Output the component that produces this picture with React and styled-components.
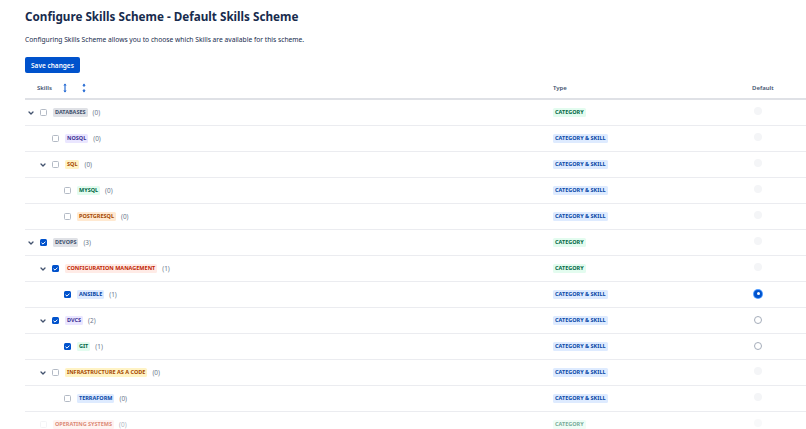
import { createGlobalStyle, styled } from "styled-components";

const GlobalStyle = createGlobalStyle`
  body {
    margin: 0;
    background: #fff;
    font-family: "Noto Sans", "Liberation Sans", sans-serif;
    color: #172b4d;
    overflow: hidden;
  }
`;

const Page = styled.div`
  padding: 7px 0 0 25px;
  width: 781px;
`;

const Title = styled.h1`
  margin: 0;
  font-size: 11.7px;
  line-height: 18px;
  font-weight: 700;
  color: #172b4d;
`;

const Description = styled.p`
  margin: 10px 0 0;
  font-size: 6.7px;
  line-height: 10px;
  color: #172b4d;
`;

const SaveButton = styled.button`
  margin-top: 12px;
  height: 16px;
  padding: 0 6px;
  border: none;
  border-radius: 2px;
  background: #0052cc;
  color: #fff;
  font-family: inherit;
  font-size: 6.5px;
  font-weight: 600;
  cursor: pointer;
`;

const Table = styled.div`
  margin-top: 4px;
`;

const HeadRow = styled.div`
  display: grid;
  grid-template-columns: 528px 199px 1fr;
  height: 21px;
  align-items: center;
  border-bottom: 2px solid #dfe1e6;
  font-size: 6px;
  font-weight: 600;
  color: #42526e;
`;

const HeadSkills = styled.div`
  display: flex;
  align-items: center;
  padding-left: 12px;
`;

const HeadLabel = styled.span`
  white-space: nowrap;
`;

const SortIcon = styled.svg`
  flex: none;
  width: 4px;
  height: 10px;
  margin-left: ${(p) => p.$gap}px;
`;

const Row = styled.div`
  display: grid;
  grid-template-columns: 528px 199px 1fr;
  height: 25px;
  align-items: center;
  border-bottom: 1px solid #ebecf0;
  opacity: ${(p) => (p.$faded ? 0.55 : 1)};
`;

const SkillCell = styled.div`
  display: flex;
  align-items: center;
  padding-left: ${(p) => p.$level * 12}px;
`;

const TypeCell = styled.div`
  display: flex;
  align-items: center;
`;

const ChevronSlot = styled.div`
  width: 15px;
  display: flex;
  align-items: center;
  padding-left: 3px;
  box-sizing: border-box;
`;

const Box = styled.span`
  width: 7px;
  height: 7px;
  box-sizing: border-box;
  border-radius: 1.5px;
  border: ${(p) => (p.$checked ? "none" : p.$faint ? "1px solid #ebecf0" : "1px solid #b3bac5")};
  background: ${(p) => (p.$checked ? "#0052cc" : "#fff")};
  display: flex;
  align-items: center;
  justify-content: center;
  margin-right: 6px;
`;

const palette = {
  grey: ["#dfe1e6", "#42526e"],
  purple: ["#eae6ff", "#403294"],
  yellow: ["#fff3c4", "#a54800"],
  orange: ["#ffe9d1", "#a54800"],
  green: ["#e3fcef", "#006644"],
  red: ["#ffebe6", "#bf2600"],
  blue: ["#deebff", "#0747a6"],
};

const Lozenge = styled.span`
  display: inline-block;
  height: 9px;
  line-height: 9px;
  padding: 0 2px;
  border-radius: 1.5px;
  font-size: 5.5px;
  font-weight: 700;
  text-transform: uppercase;
  white-space: nowrap;
  background: ${(p) => palette[p.$tone][0]};
  color: ${(p) => palette[p.$tone][1]};
`;

const Count = styled.span`
  margin-left: 5px;
  font-size: 6.4px;
  color: #6b778c;
`;

const RadioCell = styled.div`
  padding-left: 2px;
  display: flex;
`;

const Radio = styled.span`
  width: 8px;
  height: 8px;
  box-sizing: border-box;
  border-radius: 50%;
  margin-top: ${(p) => (p.$state === "disabled" ? -3 : -2)}px;
  background: ${(p) =>
    p.$state === "selected" ? "#0052cc" : p.$state === "disabled" ? "#f4f5f7" : "#fff"};
  border: ${(p) =>
    p.$state === "selected"
      ? "none"
      : p.$state === "disabled"
      ? "none"
      : "0.8px solid #a5adba"};
  box-shadow: ${(p) => (p.$state === "selected" ? "0 0 0 1px #4c9aff" : "none")};
  display: flex;
  align-items: center;
  justify-content: center;

  &::after {
    content: "";
    width: 3px;
    height: 3px;
    border-radius: 50%;
    background: #fff;
    display: ${(p) => (p.$state === "selected" ? "block" : "none")};
  }
`;

const rows = [
  { level: 0, expand: true, name: "Databases", tone: "grey", count: 0, type: "cat", radio: "disabled" },
  { level: 1, name: "NoSQL", tone: "purple", count: 0, type: "both", radio: "disabled" },
  { level: 1, expand: true, name: "SQL", tone: "yellow", count: 0, type: "both", radio: "disabled" },
  { level: 2, name: "MySQL", tone: "green", count: 0, type: "both", radio: "disabled" },
  { level: 2, name: "PostgreSQL", tone: "orange", count: 0, type: "both", radio: "disabled" },
  { level: 0, expand: true, checked: true, name: "DevOps", tone: "grey", count: 3, type: "cat", radio: "disabled" },
  { level: 1, expand: true, checked: true, name: "Configuration Management", tone: "red", count: 1, type: "cat", radio: "disabled" },
  { level: 2, checked: true, name: "Ansible", tone: "blue", count: 1, type: "both", radio: "selected" },
  { level: 1, expand: true, checked: true, name: "DVCS", tone: "purple", count: 2, type: "both", radio: "empty" },
  { level: 2, checked: true, name: "Git", tone: "green", count: 1, type: "both", radio: "empty" },
  { level: 1, expand: true, name: "Infrastructure as a Code", tone: "yellow", count: 0, type: "both", radio: "disabled" },
  { level: 2, name: "Terraform", tone: "blue", count: 0, type: "both", radio: "disabled" },
  { level: 0, name: "Operating Systems", tone: "red", count: 0, type: "cat", radio: "disabled", faded: true },
];

function Chevron() {
  return (
    <svg width="6" height="4" viewBox="0 0 6 4">
      <path d="M1 1 L3 3 L5 1" fill="none" stroke="#42526e" strokeWidth="1.3" strokeLinecap="round" strokeLinejoin="round" />
    </svg>
  );
}

function Check() {
  return (
    <svg width="5" height="4" viewBox="0 0 5 4">
      <path d="M0.8 2 L2 3.1 L4.2 0.9" fill="none" stroke="#fff" strokeWidth="1" strokeLinecap="round" strokeLinejoin="round" />
    </svg>
  );
}

function App() {
  return (
    <Page>
      <GlobalStyle />
      <Title>Configure Skills Scheme - Default Skills Scheme</Title>
      <Description>
        Configuring Skills Scheme allows you to choose which Skills are available for this scheme.
      </Description>
      <SaveButton>Save changes</SaveButton>
      <Table>
        <HeadRow>
          <HeadSkills>
            <HeadLabel>Skills</HeadLabel>
            <SortIcon $gap={11} viewBox="0 0 4 10">
              <path d="M2 0.5 L3.6 2.6 H0.4 Z M2 9.5 L3.6 7.4 H0.4 Z" fill="#0052cc" />
              <rect x="1.5" y="2.4" width="1" height="5.2" fill="#0052cc" />
            </SortIcon>
            <SortIcon $gap={15} viewBox="0 0 4 10">
              <path d="M2 0.5 L3.6 2.8 H0.4 Z M2 9.5 L3.6 7.2 H0.4 Z" fill="#0052cc" />
              <rect x="1.5" y="2.6" width="1" height="1.2" fill="#0052cc" />
              <rect x="1.5" y="6.2" width="1" height="1.2" fill="#0052cc" />
            </SortIcon>
          </HeadSkills>
          <div>Type</div>
          <div>Default</div>
        </HeadRow>
        {rows.map((r) => (
          <Row key={r.name} $faded={r.faded}>
            <SkillCell $level={r.level}>
              <ChevronSlot>{r.expand && <Chevron />}</ChevronSlot>
              <Box $checked={r.checked} $faint={r.faded}>{r.checked && <Check />}</Box>
              <Lozenge $tone={r.tone}>{r.name}</Lozenge>
              <Count>({r.count})</Count>
            </SkillCell>
            <TypeCell>
              {r.type === "cat" ? (
                <Lozenge $tone="green">Category</Lozenge>
              ) : (
                <Lozenge $tone="blue">Category &amp; Skill</Lozenge>
              )}
            </TypeCell>
            <RadioCell>
              <Radio $state={r.radio} />
            </RadioCell>
          </Row>
        ))}
      </Table>
    </Page>
  );
}

export default App;
